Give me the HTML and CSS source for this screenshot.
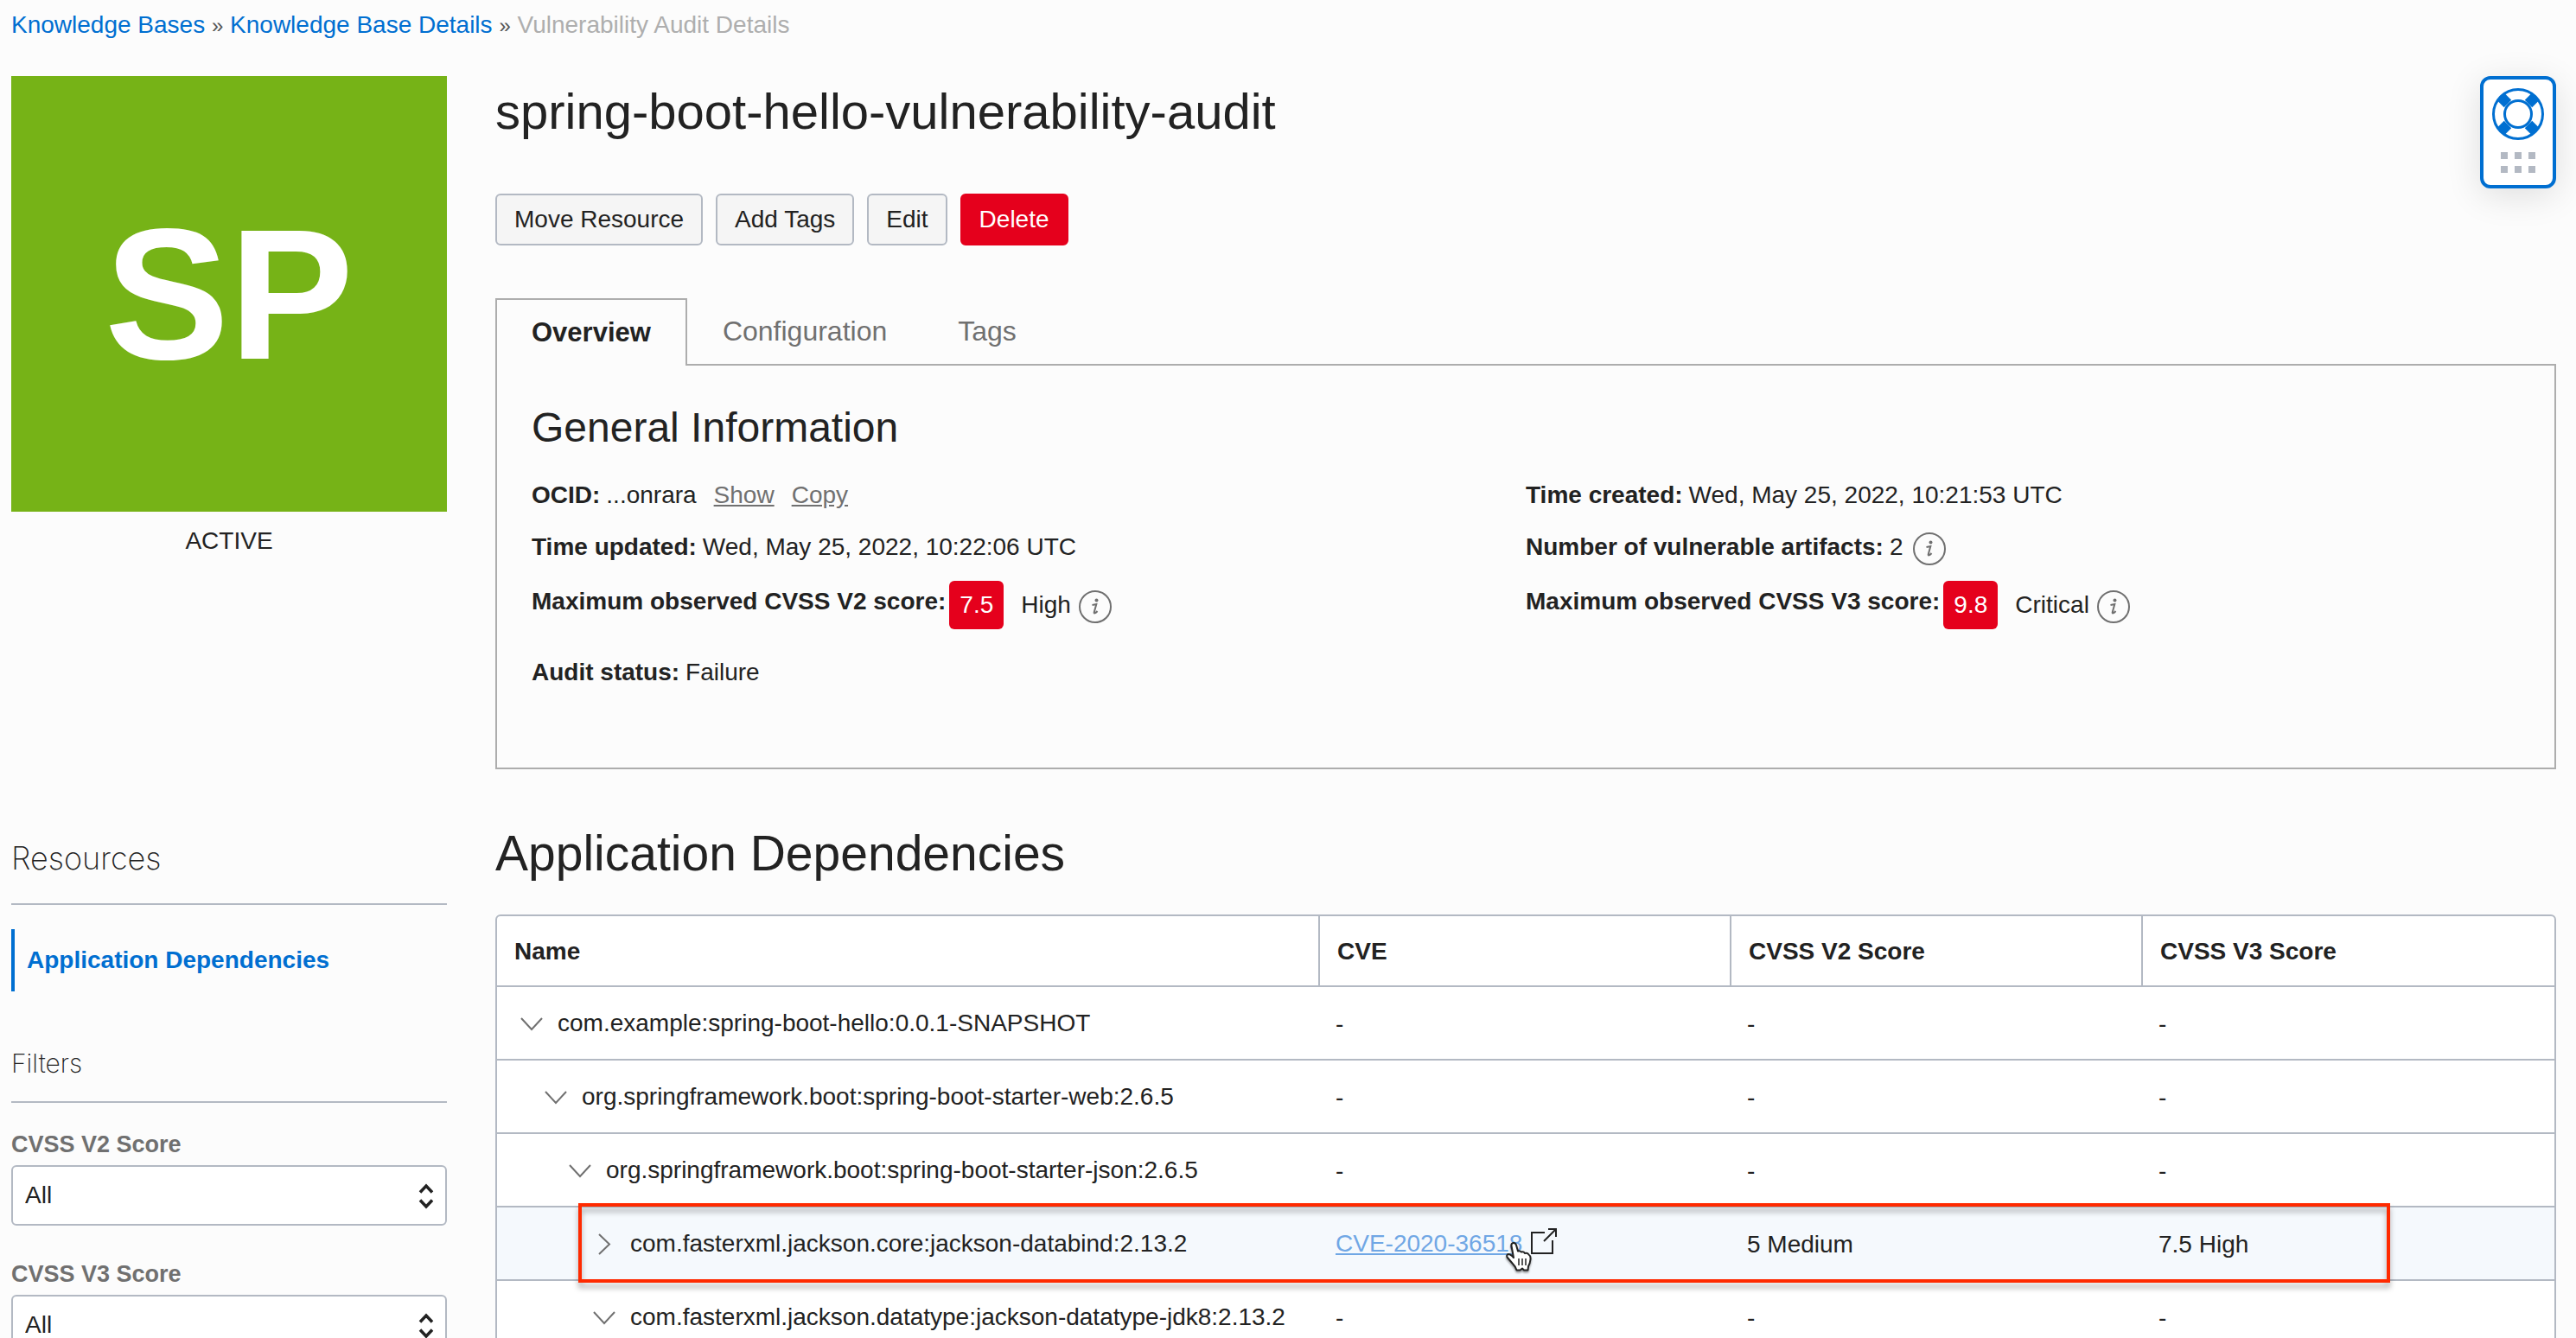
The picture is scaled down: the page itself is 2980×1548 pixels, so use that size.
FILE: index.html
```html
<!DOCTYPE html>
<html lang="en">
<head>
<meta charset="utf-8">
<meta name="viewport" content="width=device-width, initial-scale=1">
<title>Vulnerability Audit Details</title>
<link rel="stylesheet" href="styles.css">
</head>
<body>
<svg class="sprite" aria-hidden="true">
  <symbol id="chevron-down" viewBox="0 0 26 26"><path d="M1 7 L13 20 L25 7" fill="none" stroke="currentColor" stroke-width="2"/></symbol>
  <symbol id="chevron-right" viewBox="0 0 26 26"><path d="M7 2 L19 13.500 L7 25" fill="none" stroke="currentColor" stroke-width="2"/></symbol>
  <symbol id="info" viewBox="0 0 38 38"><circle cx="19" cy="19" r="18" fill="none" stroke="currentColor" stroke-width="2"/><circle cx="20.500" cy="11.500" r="2" fill="currentColor"/><path d="M15.500 17 L20.300 16 L17.700 25.500 Q17.500 27 19 26.200 Q20.200 25.500 21.500 24" fill="none" stroke="currentColor" stroke-width="2"/></symbol>
  <symbol id="updown" viewBox="0 0 20 32"><path d="M3 11.500 L10 4 L17 11.500 M3 20.500 L10 28 L17 20.500" fill="none" stroke="currentColor" stroke-width="3.500"/></symbol>
</svg>

<div class="app">
  <nav class="breadcrumb" aria-label="Breadcrumb">
    <a href="#">Knowledge Bases</a> <span class="sep">»</span>
    <a href="#">Knowledge Base Details</a> <span class="sep">»</span>
    <span class="current">Vulnerability Audit Details</span>
  </nav>

  <main class="layout">
    <section class="identity">
      <div class="tile">SP</div>
      <p class="state">ACTIVE</p>
    </section>

    <section class="detail">
      <h1 class="title">spring-boot-hello-vulnerability-audit</h1>
      <div class="actions">
        <button type="button" class="btn">Move Resource</button>
        <button type="button" class="btn">Add Tags</button>
        <button type="button" class="btn">Edit</button>
        <button type="button" class="btn btn-danger">Delete</button>
      </div>

      <div class="tabs" role="tablist">
        <button type="button" class="tab tab-active" role="tab" aria-selected="true">Overview</button>
        <button type="button" class="tab" role="tab" aria-selected="false">Configuration</button>
        <button type="button" class="tab" role="tab" aria-selected="false">Tags</button>
      </div>
      <div class="panel" role="tabpanel">
        <h2 class="panel-title">General Information</h2>
        <div class="facts">
          <div class="facts-col">
            <div class="fact"><b>OCID:</b> <span>...onrara</span> <a class="fact-link" href="#">Show</a> <a class="fact-link" href="#">Copy</a></div>
            <div class="fact"><b>Time updated:</b> <span>Wed, May 25, 2022, 10:22:06 UTC</span></div>
            <div class="fact fact-score"><b>Maximum observed CVSS V2 score:</b> <span class="score">7.5</span> <span class="severity">High</span> <svg class="info"><use href="#info"/></svg></div>
            <div class="fact"><b>Audit status:</b> <span>Failure</span></div>
          </div>
          <div class="facts-col">
            <div class="fact"><b>Time created:</b> <span>Wed, May 25, 2022, 10:21:53 UTC</span></div>
            <div class="fact"><b>Number of vulnerable artifacts:</b> <span>2</span> <svg class="info"><use href="#info"/></svg></div>
            <div class="fact fact-score"><b>Maximum observed CVSS V3 score:</b> <span class="score">9.8</span> <span class="severity">Critical</span> <svg class="info"><use href="#info"/></svg></div>
          </div>
        </div>
      </div>
    </section>

    <aside class="sidebar">
      <h3 class="side-title">Resources</h3>
      <a class="side-link" href="#">Application Dependencies</a>
      <h3 class="side-title side-title-small">Filters</h3>
      <div class="filter">
        <label for="v2">CVSS V2 Score</label>
        <div class="select-wrap">
          <select id="v2"><option>All</option></select>
          <svg class="updown"><use href="#updown"/></svg>
        </div>
      </div>
      <div class="filter">
        <label for="v3">CVSS V3 Score</label>
        <div class="select-wrap">
          <select id="v3"><option>All</option></select>
          <svg class="updown"><use href="#updown"/></svg>
        </div>
      </div>
    </aside>

    <section class="dependencies">
      <h2 class="section-title">Application Dependencies</h2>
      <div class="table-wrap">
        <table class="table">
          <thead>
            <tr><th class="col-name">Name</th><th>CVE</th><th>CVSS V2 Score</th><th>CVSS V3 Score</th></tr>
          </thead>
          <tbody>
            <tr>
              <td><div class="node"><button type="button" class="toggle" aria-label="Collapse"><svg><use href="#chevron-down"/></svg></button>com.example:spring-boot-hello:0.0.1-SNAPSHOT</div></td>
              <td class="value">-</td><td class="value">-</td><td class="value">-</td>
            </tr>
            <tr>
              <td><div class="node level-2"><button type="button" class="toggle" aria-label="Collapse"><svg><use href="#chevron-down"/></svg></button>org.springframework.boot:spring-boot-starter-web:2.6.5</div></td>
              <td class="value">-</td><td class="value">-</td><td class="value">-</td>
            </tr>
            <tr>
              <td><div class="node level-3"><button type="button" class="toggle" aria-label="Collapse"><svg><use href="#chevron-down"/></svg></button>org.springframework.boot:spring-boot-starter-json:2.6.5</div></td>
              <td class="value">-</td><td class="value">-</td><td class="value">-</td>
            </tr>
            <tr class="hovered">
              <td><div class="node level-4"><button type="button" class="toggle" aria-label="Expand"><svg><use href="#chevron-right"/></svg></button>com.fasterxml.jackson.core:jackson-databind:2.13.2</div></td>
              <td>
                <div class="cve">
                  <a href="#">CVE-2020-36518</a>
                  <svg class="external" viewBox="0 0 30 30"><path d="M16 5 H1 V29 H25 V14 M20 1 H29 V10 M29 1 L15 15" fill="none" stroke="currentColor" stroke-width="2"/></svg>
                  <svg class="pointer" viewBox="0 0 32 36"><path d="M10 19 L7.500 5.500 Q7 2.500 9.500 2 Q12 1.500 13 4.500 L15 11.500 Q17 10.500 19 12.500 Q21.500 11.500 23 14 Q26 13 27.500 15.500 Q30 17 29.500 21 Q29 26 27 29 L26.500 33.500 H22 L20 31.500 L17.500 33.500 H13.500 Q12 29 8.500 25.500 L2.500 18.500 Q1.500 15.500 4 15 Q6.500 15 10 19 Z" fill="#fff" stroke="#222" stroke-width="2" stroke-linejoin="round"/><path d="M16 20 V28 M20 20 V28 M24 20 V28" stroke="#222" stroke-width="1.500"/></svg>
                </div>
              </td>
              <td class="value">5 Medium</td><td class="value">7.5 High</td>
            </tr>
            <tr>
              <td><div class="node level-4"><button type="button" class="toggle" aria-label="Collapse"><svg><use href="#chevron-down"/></svg></button>com.fasterxml.jackson.datatype:jackson-datatype-jdk8:2.13.2</div></td>
              <td class="value">-</td><td class="value">-</td><td class="value">-</td>
            </tr>
          </tbody>
        </table>
        <div class="highlight"></div>
      </div>
    </section>
  </main>

  <button type="button" class="help" aria-label="Help">
    <svg class="help-ring" viewBox="0 0 60 60">
      <circle cx="30" cy="30" r="28.500" fill="#fff" stroke="currentColor" stroke-width="3"/>
      <path d="M18 18 L10 10 M42 18 L50 10 M18 42 L10 50 M42 42 L50 50" stroke="currentColor" stroke-width="12"/>
      <circle cx="30" cy="30" r="15.500" fill="#fff" stroke="currentColor" stroke-width="3"/>
    </svg>
    <svg class="help-grip" viewBox="0 0 40 24"><path d="M0 0h8v8h-8z M16 0h8v8h-8z M32 0h8v8h-8z M0 16h8v8h-8z M16 16h8v8h-8z M32 16h8v8h-8z" fill="#b3b9c3"/></svg>
  </button>
</div>
</body>
</html>
```
FILE: styles.css
```css
:root {
  --ink: #222222;
  --muted: #707070;
  --link: #006fd1;
  --line: #b3b9c3;
  --danger: #e5001c;
}

* { box-sizing: border-box; }

body {
  margin: 0;
  background: #fcfcfc;
  color: var(--ink);
  font: 28px/32px "Liberation Sans", Arial, sans-serif;
}

button, select { font: inherit; color: inherit; cursor: pointer; }
h1, h2, h3, p { margin: 0; font-weight: 400; }
a { color: var(--link); text-decoration: none; }
.sprite { display: none; }

.app {
  position: relative;
  height: 100vh;
  overflow: hidden;
  padding: 13px 23px 0 13px;
}

.breadcrumb { height: 32px; margin-bottom: 43px; white-space: nowrap; }
.sep { font-size: 24px; color: #555; }
.current { color: #aeaeae; }

.layout {
  display: grid;
  grid-template-columns: 504px minmax(0, 1fr);
  column-gap: 56px;
  row-gap: 65px;
}

/* Resource tile */
.tile {
  display: flex;
  align-items: center;
  justify-content: center;
  height: 504px;
  background: #76b317;
  color: #fff;
  font-size: 216px;
  font-weight: 700;
}
.state { margin-top: 18px; text-align: center; }

/* Heading and actions */
.title { padding-top: 9px; font-size: 58px; line-height: 64px; }
.actions { display: flex; gap: 15px; margin: 63px 0 61px; }
.btn {
  height: 60px;
  padding: 0 20px;
  border: 2px solid var(--line);
  border-radius: 6px;
  background: #f5f5f5;
}
.btn-danger { background: var(--danger); border-color: var(--danger); color: #fff; }

/* Tabs */
.tabs { display: flex; align-items: flex-start; height: 76px; }
.tab {
  height: 76px;
  padding: 0 41px;
  border: 0;
  background: none;
  color: var(--muted);
  font-size: 32px;
}
.tab-active {
  position: relative;
  height: 78px;
  padding: 0 40px;
  border: 2px solid #adadad;
  border-bottom: 0;
  background: #fcfcfc;
  color: var(--ink);
  font-size: 31px;
  font-weight: 700;
}
.panel { padding: 44px 40px 80px; border: 2px solid #adadad; }
.panel-title { margin-bottom: 20px; font-size: 48px; line-height: 56px; }
.facts { display: grid; grid-template-columns: 1fr 1fr; }
.fact { display: flex; align-items: center; gap: 7px; height: 60px; white-space: nowrap; }
.fact-link { margin-left: 13px; color: var(--muted); text-decoration: underline; }
.fact-score { gap: 4px; height: 85px; padding: 9px 0 20px; }
.fact-score b { padding-bottom: 8px; }
.score {
  width: 63px;
  border-radius: 6px;
  background: var(--danger);
  color: #fff;
  line-height: 56px;
  text-align: center;
}
.severity { margin-left: 16px; }
.info { width: 38px; height: 38px; margin: 4px 0 0 5px; color: var(--muted); }

/* Sidebar */
.side-title {
  padding: 18px 0 32px;
  border-bottom: 2px solid var(--line);
  font-family: Inter, "Liberation Sans", sans-serif;
  font-size: 36px;
  font-weight: 200;
  line-height: 40px;
}
.side-title-small { margin: 63px 0 32px; padding: 0 0 24px; font-size: 30px; }
.side-link {
  display: flex;
  align-items: center;
  height: 72px;
  margin-top: 28px;
  padding-left: 14px;
  border-left: 4px solid var(--link);
  font-weight: 700;
}
.filter { display: grid; gap: 8px; margin-bottom: 40px; }
.filter label { color: var(--muted); font-size: 27px; font-weight: 700; }
.select-wrap { position: relative; }
.select-wrap select {
  display: block;
  width: 100%;
  height: 70px;
  padding: 0 14px;
  border: 2px solid var(--line);
  border-radius: 6px;
  background: #fff;
  appearance: none;
}
.updown { position: absolute; top: 20px; right: 14px; width: 20px; height: 32px; pointer-events: none; }

/* Dependency table */
.section-title { margin-bottom: 39px; font-size: 57px; line-height: 64px; }
.table-wrap { position: relative; }
.table {
  width: 100%;
  table-layout: fixed;
  border: 2px solid var(--line);
  border-radius: 6px;
  border-spacing: 0;
  background: #fff;
}
.table th { height: 80px; padding: 2px 20px 0; text-align: left; }
.table th:not(:last-child) { border-right: 2px solid var(--line); }
.col-name { width: 40%; }
.table td { height: 85px; padding: 0 18px; border-top: 2px solid var(--line); white-space: nowrap; }
.table td:first-child { padding-left: 20px; }
.table .value { padding-top: 2px; }
.hovered { background: #f5f9fd; }
.node { display: flex; align-items: center; }
.level-2 { padding-left: 28px; }
.level-3 { padding-left: 56px; }
.level-4 { padding-left: 84px; }
.toggle { width: 50px; height: 32px; padding: 3px 7px; border: 0; background: none; color: var(--muted); }
.toggle svg { display: block; width: 26px; height: 26px; }
.cve { position: relative; display: flex; align-items: center; gap: 10px; }
.cve a { color: #70a7e5; text-decoration: underline; }
.external { width: 30px; height: 30px; margin-bottom: 6px; }
.pointer { position: absolute; left: 196px; top: 15px; width: 32px; height: 36px; filter: drop-shadow(0 2px 1px rgba(0, 0, 0, 0.4)); }
.highlight {
  position: absolute;
  left: 96px;
  right: 192px;
  top: 334px;
  height: 92px;
  border: 4px solid #ff2a00;
  filter: drop-shadow(0 6px 3px rgba(0, 0, 0, 0.3));
  pointer-events: none;
}

/* Floating help */
.help {
  position: absolute;
  top: 88px;
  right: 23px;
  display: flex;
  flex-direction: column;
  align-items: center;
  gap: 14px;
  width: 88px;
  height: 130px;
  padding: 10px 0 0;
  border: 4px solid var(--link);
  border-radius: 12px;
  background: #fff;
  color: var(--link);
  box-shadow: 0 8px 40px rgba(0, 0, 0, 0.12);
}
.help-ring { width: 60px; height: 60px; }
.help-grip { width: 40px; height: 24px; }
```
